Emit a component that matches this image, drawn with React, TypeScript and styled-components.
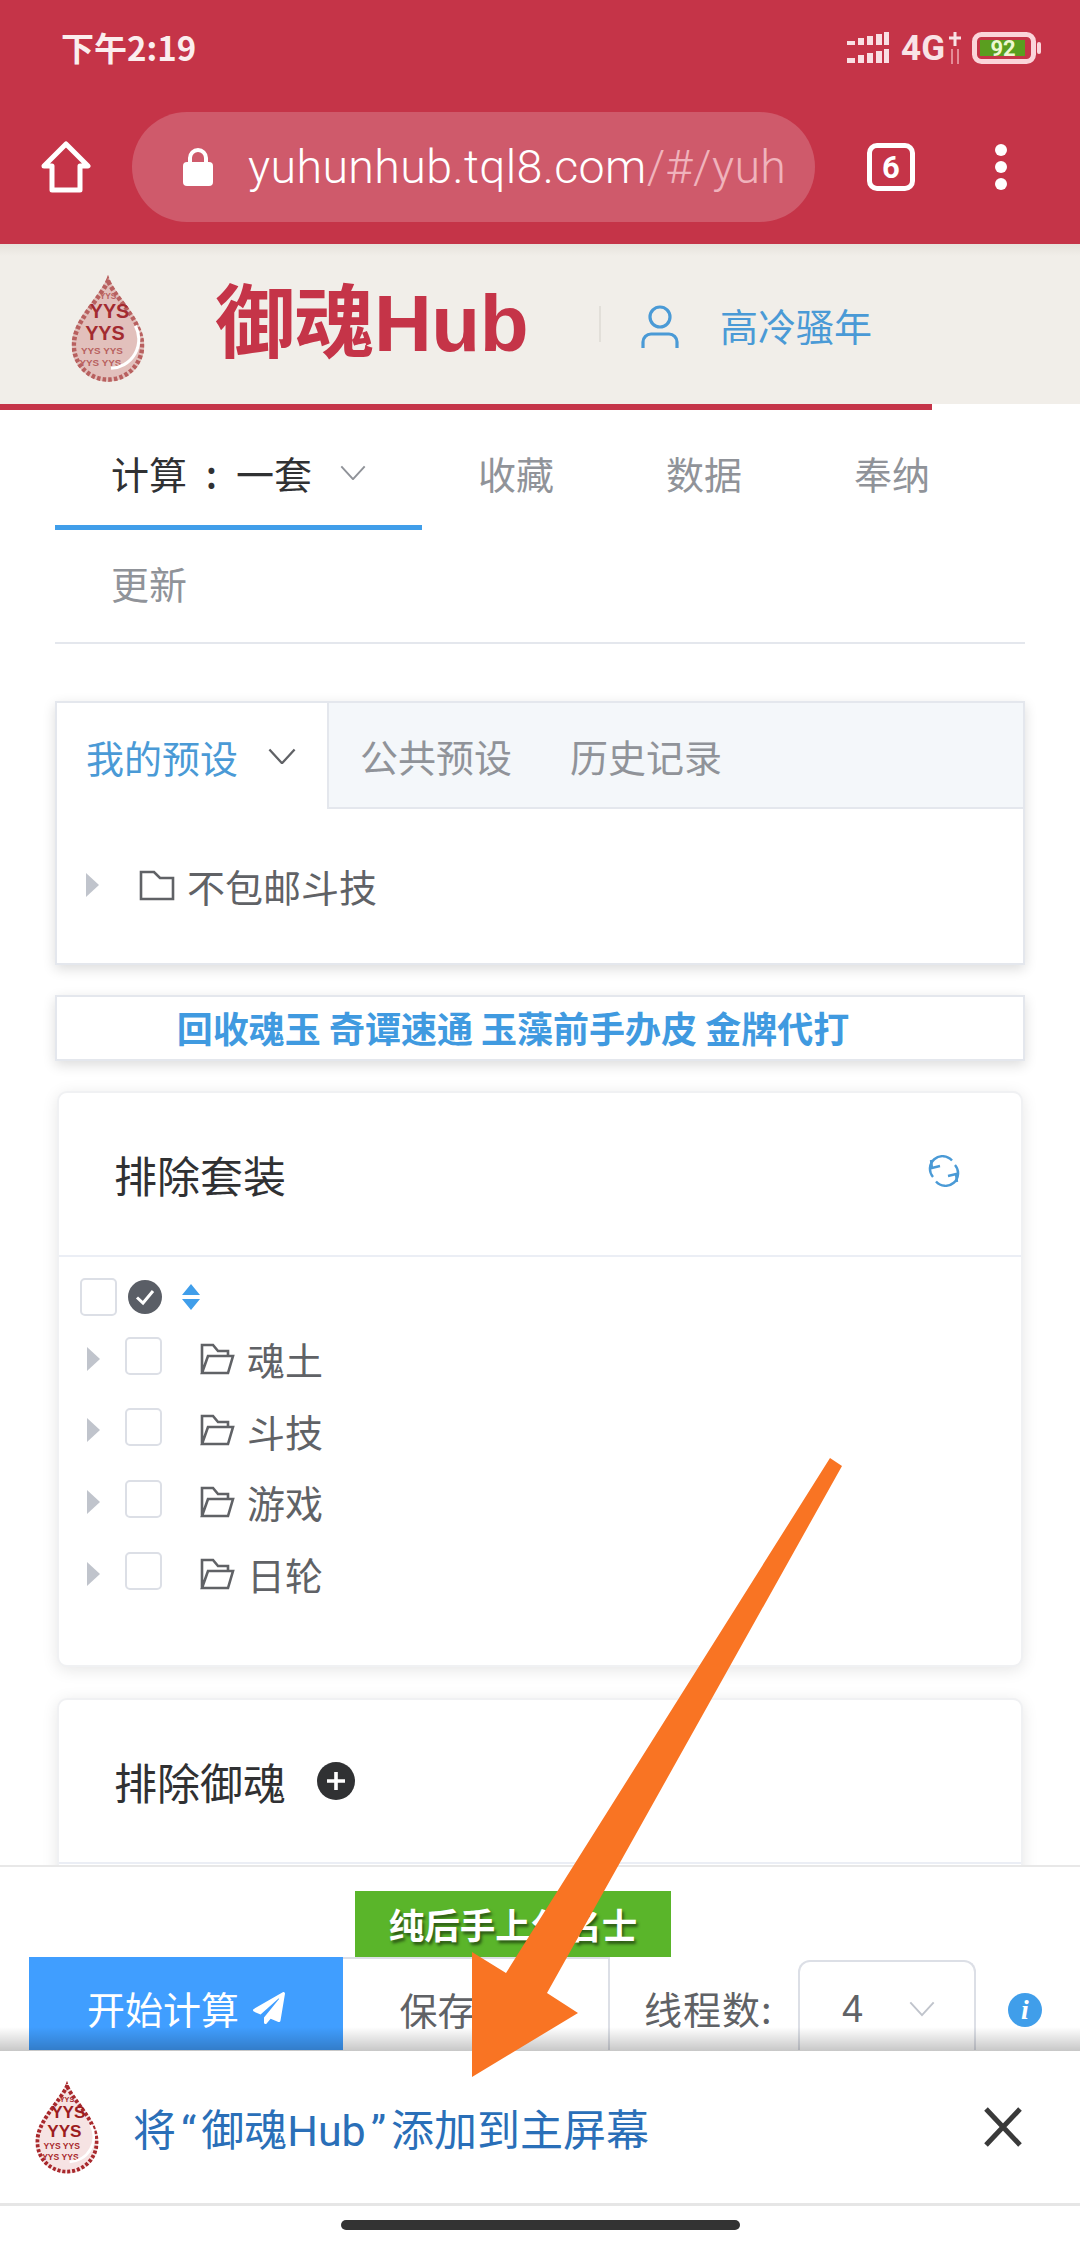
import React from "react";
import styled, { createGlobalStyle } from "styled-components";
import { FaPaperPlane } from "react-icons/fa";

const Global = createGlobalStyle`
  html, body { margin: 0; padding: 0; background: #fff; }
  body { font-family: "Noto Sans CJK SC", "Noto Sans", sans-serif; }
  * { box-sizing: border-box; }
`;

const Page = styled.div`
  position: relative;
  width: 1080px;
  height: 2248px;
  display: flex;
  flex-direction: column;
  overflow: hidden;
  background: #fff;
`;

/* browser chrome */
const Chrome = styled.header`
  height: 244px;
  flex: none;
  background: #c53448;
  color: #fff;
  display: flex;
  flex-direction: column;
`;
const StatusBar = styled.div`
  height: 111px;
  padding: 26px 38px 0 61px;
  display: flex;
  justify-content: space-between;
  align-items: flex-start;
`;
const Clock = styled.span`
  font-size: 33px;
  line-height: 42px;
  font-weight: 700;
  color: #fbeeee;
`;
const StatusIcons = styled.div`
  display: flex;
  align-items: center;
  gap: 12px;
  height: 44px;
`;
const Network = styled.span`
  font-family: "Roboto", sans-serif;
  font-size: 35px;
  font-weight: 700;
  color: #f9e3e6;
  line-height: 1;
`;
const Toolbar = styled.div`
  height: 112px;
  padding-left: 41px;
  display: flex;
  align-items: center;
`;
const UrlPill = styled.div`
  width: 683px;
  height: 110px;
  margin-left: 41px;
  padding: 0 24px 0 51px;
  border-radius: 55px;
  background: #cf5a6b;
  display: flex;
  align-items: center;
  gap: 35px;
  overflow: hidden;
`;
const UrlText = styled.span`
  font-family: "Roboto", sans-serif;
  font-size: 46.5px;
  font-weight: 300;
  white-space: nowrap;
  color: #fff;
  letter-spacing: 0.4px;
`;
const UrlFaded = styled.span`
  color: #f0b3bc;
`;
const TabCount = styled.div`
  width: 48px;
  height: 48px;
  margin-left: 52px;
  border: 5px solid #fff;
  border-radius: 10px;
  display: flex;
  align-items: center;
  justify-content: center;
  font-family: "Roboto", sans-serif;
  font-size: 31px;
  font-weight: 700;
`;
const MenuDots = styled.div`
  margin-left: 80px;
  display: flex;
  flex-direction: column;
  gap: 5px;
`;
const Dot = styled.i`
  width: 12px;
  height: 12px;
  border-radius: 50%;
  background: #fff;
`;

/* site header */
const SiteHeader = styled.div`
  height: 160px;
  flex: none;
  background: linear-gradient(#e6e2dc 0, #f1eee9 12px);
  display: flex;
  align-items: center;
  padding-left: 70px;
`;
const LogoSlot = styled.div`
  display: flex;
  margin-top: 8px;
`;
const Title = styled.h1`
  margin: 0 0 0 69px;
  font-family: "Liberation Sans", "Noto Sans CJK SC", sans-serif;
  font-size: 80px;
  line-height: 1;
  font-weight: 700;
  color: #c53448;
  letter-spacing: -0.5px;
  white-space: nowrap;
  width: 312px;
`;
const VRule = styled.span`
  width: 2px;
  height: 36px;
  margin: 0 40px 0 72px;
  background: #e2dfd9;
`;
const UserIcon = styled.svg`
  margin-top: 5px;
`;
const UserName = styled.span`
  margin-left: 41px;
  font-size: 38px;
  color: #4a9ad6;
`;
const Progress = styled.div`
  height: 6px;
  flex: none;
  width: 932px;
  background: #c53448;
`;

/* main */
const Main = styled.main`
  height: 1455px;
  flex: none;
  padding: 10px 55px 0;
  overflow: hidden;
`;
const Tabs = styled.nav`
  display: flex;
  flex-wrap: wrap;
  border-bottom: 2px solid #e4e7ed;
  padding-bottom: 2px;
`;
const Tab = styled.div<{ $active?: boolean }>`
  height: 110px;
  padding: 0 56px;
  display: flex;
  align-items: center;
  font-size: 38px;
  color: ${(p) => (p.$active ? "#303133" : "#909399")};
  border-bottom: ${(p) => (p.$active ? "5px solid #409eea" : "5px solid transparent")};
`;
const TabColon = styled.span`
  width: 49px;
  text-align: center;
  font-weight: 500;
`;
const TabChevron = styled.span`
  display: flex;
  margin-left: 28px;
`;
const PresetCard = styled.section`
  margin-top: 57px;
  height: 264px;
  border: 2px solid #e4e7ed;
  background: #fff;
  box-shadow: 0 4px 12px rgba(0, 0, 0, 0.14);
`;
const PresetTabs = styled.div`
  height: 106px;
  display: flex;
  background: #f4f7fa;
  border-bottom: 2px solid #e4e7ed;
`;
const PresetTab = styled.div<{ $active?: boolean }>`
  display: flex;
  align-items: center;
  gap: 30px;
  padding: 0 ${(p) => (p.$active ? "31px" : "27px")} 0 ${(p) => (p.$active ? "29px" : "31px")};
  height: ${(p) => (p.$active ? "106px" : "104px")};
  font-size: 38px;
  color: ${(p) => (p.$active ? "#4a9ad6" : "#909399")};
  background: ${(p) => (p.$active ? "#fff" : "transparent")};
  border-right: ${(p) => (p.$active ? "2px solid #e4e7ed" : "none")};
`;
const TreeRow = styled.div`
  display: flex;
  align-items: center;
  height: 72px;
  padding-left: 29px;
  font-size: 38px;
  color: #606266;
`;
const PresetBody = styled.div`
  padding-top: 40px;
`;
const Caret = styled.i`
  width: 0;
  height: 0;
  flex: none;
  border-left: 13px solid #c0c4cc;
  border-top: 12px solid transparent;
  border-bottom: 12px solid transparent;
`;
const PresetFolder = styled.span`
  display: flex;
  margin: 0 12px 0 40px;
`;
const AdBanner = styled.a`
  display: block;
  margin-top: 30px;
  height: 66px;
  border: 2px solid #e4e7ed;
  background: #fff;
  box-shadow: 0 4px 12px rgba(0, 0, 0, 0.14);
  text-align: center;
  font-size: 36px;
  line-height: 60px;
  font-weight: 700;
  color: #409ae0;
  padding-right: 54px;
  white-space: nowrap;
`;
const Card = styled.section<{ $mt: number }>`
  margin: ${(p) => p.$mt}px 2px 0;
  background: #fff;
  border: 2px solid #f0f1f3;
  border-radius: 10px;
  box-shadow: 0 3px 16px rgba(0, 0, 0, 0.1);
`;
const CardHead = styled.div`
  height: 164px;
  display: flex;
  align-items: center;
  justify-content: space-between;
  padding: 0 52px 0 55px;
  border-bottom: 2px solid #ebeef5;
`;
const RefreshIcon = styled.svg`
  margin: 0 0 6px;
  transform: translateX(-9px);
`;
const CardTitle = styled.h2`
  margin: 0;
  font-size: 43px;
  font-weight: 400;
  color: #303133;
  display: flex;
  align-items: center;
  gap: 31px;
`;
const CardBody = styled.div<{ $h: number }>`
  height: ${(p) => p.$h}px;
  padding: 20px 0 0 21px;
`;
const ToolRow = styled.div`
  height: 40px;
  display: flex;
  align-items: center;
  margin-bottom: 6px;
`;
const CheckBox = styled.span`
  width: 37px;
  height: 38px;
  flex: none;
  display: block;
  border: 2px solid #dcdfe6;
  border-radius: 5px;
  background: #fff;
`;
const SortIcon = styled.svg`
  margin-left: 20px;
`;
const CheckCircle = styled.svg`
  margin-left: 11px;
`;
const Tree = styled.div`
  display: flex;
  flex-direction: column;
`;
const TreeItem = styled.div`
  height: 71.6px;
  display: flex;
  align-items: center;
  font-size: 38px;
  color: #606266;
  padding-left: 7px;
`;
const ItemBox = styled(CheckBox)`
  margin: 0 38px 0 25px;
  position: relative;
  top: -3px;
`;
const ItemLabel = styled.span`
  margin-left: 12px;
`;

/* bottom */
const ActionArea = styled.div`
  position: relative;
  height: 186px;
  flex: none;
  background: #fff;
  border-top: 2px solid #e8e8e8;
  padding-top: 24px;
  overflow: hidden;
`;
const Badge = styled.div`
  width: 316px;
  height: 66px;
  margin-left: 355px;
  background: #5ab52a;
  color: #fff;
  font-size: 35.5px;
  font-weight: 700;
  line-height: 66px;
  text-align: center;
  text-shadow: 2px 3px 3px rgba(0, 0, 0, 0.5);
`;
const ActionRow = styled.div`
  display: flex;
  height: 93px;
  padding-left: 29px;
  align-items: stretch;
`;
const StartButton = styled.button`
  width: 314px;
  border: 0;
  padding: 8px 0 0;
  background: #409eff;
  color: #fff;
  font: inherit;
  font-size: 38px;
  display: flex;
  align-items: center;
  justify-content: center;
  gap: 14px;
`;
const SaveButton = styled.button`
  width: 267px;
  border: 2px solid #dcdfe6;
  border-left: 0;
  border-bottom: 0;
  padding: 8px 0 0;
  background: #fff;
  color: #606266;
  font: inherit;
  font-size: 38px;
`;
const ThreadLabel = styled.span`
  margin-left: 34px;
  width: 154px;
  padding-top: 8px;
  font-size: 38px;
  letter-spacing: 1px;
  color: #606266;
  display: flex;
  align-items: center;
`;
const Select = styled.div`
  width: 178px;
  margin-top: 3px;
  border: 2px solid #dcdfe6;
  border-bottom: 0;
  border-radius: 12px 12px 0 0;
  display: flex;
  align-items: center;
  padding: 6px 0 0 42px;
  gap: 46px;
  font-family: "Liberation Sans", sans-serif;
  font-size: 38px;
  color: #606266;
`;
const InfoIcon = styled.span`
  align-self: center;
  margin: 12px 0 0 32px;
  width: 34px;
  height: 34px;
  border-radius: 50%;
  background: #409eea;
  color: #fff;
  font-family: "Liberation Serif", serif;
  font-style: italic;
  font-weight: 700;
  font-size: 28px;
  line-height: 34px;
  text-align: center;
`;
const ShadeOverlay = styled.div`
  position: absolute;
  left: 0;
  right: 0;
  bottom: 0;
  height: 24px;
  background: linear-gradient(rgba(0, 0, 0, 0), rgba(0, 0, 0, 0.22));
  pointer-events: none;
`;
const InstallBar = styled.div`
  height: 155px;
  flex: none;
  background: #fff;
  border-bottom: 3px solid #e6e6e6;
  display: flex;
  align-items: center;
  padding: 0 58px 0 34px;
`;
const InstallText = styled.span`
  margin-left: 33px;
  flex: 1;
  font-family: "Roboto", "Noto Sans CJK SC", sans-serif;
  font-size: 43px;
  color: #2a6fb8;
  white-space: nowrap;
`;
const Quote = styled.span`
  margin: 0 5px;
`;
const NavArea = styled.div`
  flex: 1;
  display: flex;
  justify-content: center;
  padding-top: 14px;
  background: #fff;
`;
const HomeBar = styled.div`
  width: 399px;
  height: 10px;
  border-radius: 5px;
  background: #333;
`;
const ArrowOverlay = styled.svg`
  position: absolute;
  left: 0;
  top: 0;
  pointer-events: none;
`;

const Chevron = ({ size = 26, color = "#909399", sw = 2 }: { size?: number; color?: string; sw?: number }) => (
  <svg width={size} height={size * 0.6} viewBox="0 0 26 16" fill="none" stroke={color} strokeWidth={sw}>
    <path d="M1 1.5 13 14.5 25 1.5" />
  </svg>
);

const DROP = "M50 1C58 28 98 58 98 94A48 48 0 0 1 2 94C2 58 42 28 50 1Z";

const Logo = ({ id, w, pale }: { id: string; w: number; pale?: boolean }) => {
  const ink = pale ? "#a32a30" : "#9c1c20";
  const soft = pale ? "#b8605f" : "#a8282c";
  return (
    <svg width={w} viewBox="0 0 100 142" style={{ flex: "none" }}>
      <defs>
        <clipPath id={id}>
          <path d={DROP} />
        </clipPath>
      </defs>
      <g clipPath={`url(#${id})`} fontFamily="Liberation Sans, sans-serif" fontWeight="700" textAnchor="middle">
        <path d={DROP} fill={pale ? "#e2c0bc" : "#f6e3e3"} />
        <path d={DROP} fill="none" stroke={soft} strokeWidth="12" strokeDasharray="5 3" />
        <text x="50" y="33" fontSize="11" fill={soft}>YYS</text>
        <text x="52" y="58" fontSize="26" fill={ink}>YYS</text>
        <text x="46" y="87" fontSize="26" fill={ink}>YYS</text>
        <text x="42" y="105" fontSize="13" fill={soft}>YYS YYS</text>
        <text x="40" y="121" fontSize="13" fill={soft}>YYS YYS</text>
        <path d="M86 68A38 38 0 0 1 54 124" fill="none" stroke="#fff" strokeWidth="4" />
      </g>
    </svg>
  );
};

const FolderClosed = () => (
  <svg width="36" height="36" viewBox="0 0 36 36" fill="none" stroke="#606266" strokeWidth="2.6">
    <path d="M2 5H15L21 11H34V32H2Z" />
  </svg>
);
const FolderOpen = () => (
  <svg width="35" height="34" viewBox="0 0 35 34" fill="none" stroke="#606266" strokeWidth="2.6">
    <path d="M2 31V3H13L18 9H28V14M2 31H28L33 14H8L2 31Z" />
  </svg>
);

const items = ["魂土", "斗技", "游戏", "日轮"];

export default function App() {
  return (
    <Page>
      <Global />
      <Chrome>
        <StatusBar>
          <Clock>下午2:19</Clock>
          <StatusIcons>
            <svg width="42" height="32" viewBox="0 0 42 32" fill="#f9dfe3">
              <path d="M0 9h8v4H0zM11 6h6v7h-6zM20 4h6v9h-6zM29 2h6v11h-6zM37 0h5v13h-5zM0 26h8v5H0zM11 23h6v8h-6zM20 21h6v10h-6zM29 19h6v12h-6zM37 17h5v14h-5z" />
            </svg>
            <Network>4G</Network>
            <svg width="14" height="34" viewBox="0 0 14 34" stroke="#f9e3e6" strokeWidth="3" fill="none" style={{ marginLeft: -9 }}>
              <path d="M7 1V15M1 7H13" />
              <path d="M4 18V33M10 18V33" stroke="#e58b97" strokeWidth="2" />
            </svg>
            <svg width="70" height="32" viewBox="0 0 70 32" style={{ marginLeft: -2 }}>
              <rect x="2.5" y="2.5" width="59" height="27" rx="7" fill="none" stroke="#fbd5da" strokeWidth="5" />
              <rect x="8" y="8" width="45" height="16" fill="#5a9e1f" />
              <rect x="65" y="10" width="4" height="12" rx="2" fill="#fbd5da" />
              <text x="31" y="24" textAnchor="middle" fontFamily="Roboto, sans-serif" fontWeight="700" fontSize="22" fill="#eef8d0">92</text>
            </svg>
          </StatusIcons>
        </StatusBar>
        <Toolbar>
          <svg width="50" height="52" viewBox="0 0 50 52" fill="none" stroke="#fff" strokeWidth="5" strokeLinejoin="round">
            <path d="M25 3 47 25H39V49H11V25H3Z" />
          </svg>
          <UrlPill>
            <svg width="30" height="38" viewBox="0 0 30 38" style={{ flex: "none" }}>
              <path d="M7 16V10a8 8 0 0 1 16 0v6" fill="none" stroke="#fff" strokeWidth="4" />
              <rect x="0" y="14" width="30" height="24" rx="4" fill="#fff" />
            </svg>
            <UrlText>
              yuhunhub.tql8.com<UrlFaded>/#/yuh</UrlFaded>
            </UrlText>
          </UrlPill>
          <TabCount>6</TabCount>
          <MenuDots>
            <Dot />
            <Dot />
            <Dot />
          </MenuDots>
        </Toolbar>
      </Chrome>

      <SiteHeader>
        <LogoSlot>
          <Logo id="logo-top" w={76} pale />
        </LogoSlot>
        <Title>御魂Hub</Title>
        <VRule />
        <UserIcon width="38" height="44" viewBox="0 0 38 44" fill="none" stroke="#4a9ad6" strokeWidth="3.2">
          <circle cx="19" cy="12" r="10" />
          <path d="M2 43V37a8 8 0 0 1 8-8H28a8 8 0 0 1 8 8V43" />
        </UserIcon>
        <UserName>高冷骚年</UserName>
      </SiteHeader>
      <Progress />

      <Main>
        <Tabs>
          <Tab $active>
            计算<TabColon>:</TabColon>一套
            <TabChevron>
              <Chevron size={26} />
            </TabChevron>
          </Tab>
          <Tab>收藏</Tab>
          <Tab>数据</Tab>
          <Tab>奉纳</Tab>
          <Tab>更新</Tab>
        </Tabs>

        <PresetCard>
          <PresetTabs>
            <PresetTab $active>
              我的预设
              <Chevron size={28} color="#606266" sw={2.2} />
            </PresetTab>
            <PresetTab>公共预设</PresetTab>
            <PresetTab>历史记录</PresetTab>
          </PresetTabs>
          <PresetBody>
            <TreeRow>
              <Caret />
              <PresetFolder>
                <FolderClosed />
              </PresetFolder>
              不包邮斗技
            </TreeRow>
          </PresetBody>
        </PresetCard>

        <AdBanner>回收魂玉 奇谭速通 玉藻前手办皮 金牌代打</AdBanner>

        <Card $mt={30}>
          <CardHead>
            <CardTitle>排除套装</CardTitle>
            <RefreshIcon width="32" height="32" viewBox="0 0 32 32" fill="none" stroke="#4a9ad6" strokeWidth="2.4">
              <path d="M24 5.5A12.5 12.5 0 0 0 5 22" />
              <path d="M8 26.5A12.5 12.5 0 0 0 27 10" />
              <path d="M3 5 4 13 12 11M29 27 28 19 20 21" />
            </RefreshIcon>
          </CardHead>
          <CardBody $h={408}>
            <ToolRow>
              <CheckBox />
              <CheckCircle width="34" height="34" viewBox="0 0 34 34">
                <circle cx="17" cy="17" r="17" fill="#5a5e66" />
                <path d="M9 17.5 15 23 25 11" fill="none" stroke="#fff" strokeWidth="3" />
              </CheckCircle>
              <SortIcon width="18" height="26" viewBox="0 0 18 26" fill="#409eea">
                <path d="M9 0 18 11H0ZM0 15H18L9 26Z" />
              </SortIcon>
            </ToolRow>
            <Tree>
              {items.map((name) => (
                <TreeItem key={name}>
                  <Caret />
                  <ItemBox />
                  <FolderOpen />
                  <ItemLabel>{name}</ItemLabel>
                </TreeItem>
              ))}
            </Tree>
          </CardBody>
        </Card>

        <Card $mt={31}>
          <CardHead>
            <CardTitle>
              排除御魂
              <svg width="38" height="38" viewBox="0 0 38 38">
                <circle cx="19" cy="19" r="19" fill="#303133" />
                <path d="M19 10V28M10 19H28" stroke="#fff" strokeWidth="3.6" />
              </svg>
            </CardTitle>
          </CardHead>
          <CardBody $h={120} />
        </Card>
      </Main>

      <ActionArea>
        <Badge>纯后手上分名士</Badge>
        <ActionRow>
          <StartButton>
            开始计算
            <FaPaperPlane size={32} />
          </StartButton>
          <SaveButton>保存方案</SaveButton>
          <ThreadLabel>线程数:</ThreadLabel>
          <Select>
            4
            <Chevron size={26} color="#c0c4cc" />
          </Select>
          <InfoIcon>i</InfoIcon>
        </ActionRow>
        <ShadeOverlay />
      </ActionArea>

      <InstallBar>
        <Logo id="logo-bar" w={66} />
        <InstallText>
          将<Quote>“</Quote>御魂Hub<Quote>”</Quote>添加到主屏幕
        </InstallText>
        <svg width="38" height="40" viewBox="0 0 38 40" fill="none" stroke="#3a3a3a" strokeWidth="5">
          <path d="M2 2 36 38M36 2 2 38" />
        </svg>
      </InstallBar>
      <NavArea>
        <HomeBar />
      </NavArea>

      <ArrowOverlay width="1080" height="2248" viewBox="0 0 1080 2248">
        <polygon points="830,1458 842,1466 547,1993 578,2013 472,2077 472,1952 506,1973" fill="#f97423" />
      </ArrowOverlay>
    </Page>
  );
}
